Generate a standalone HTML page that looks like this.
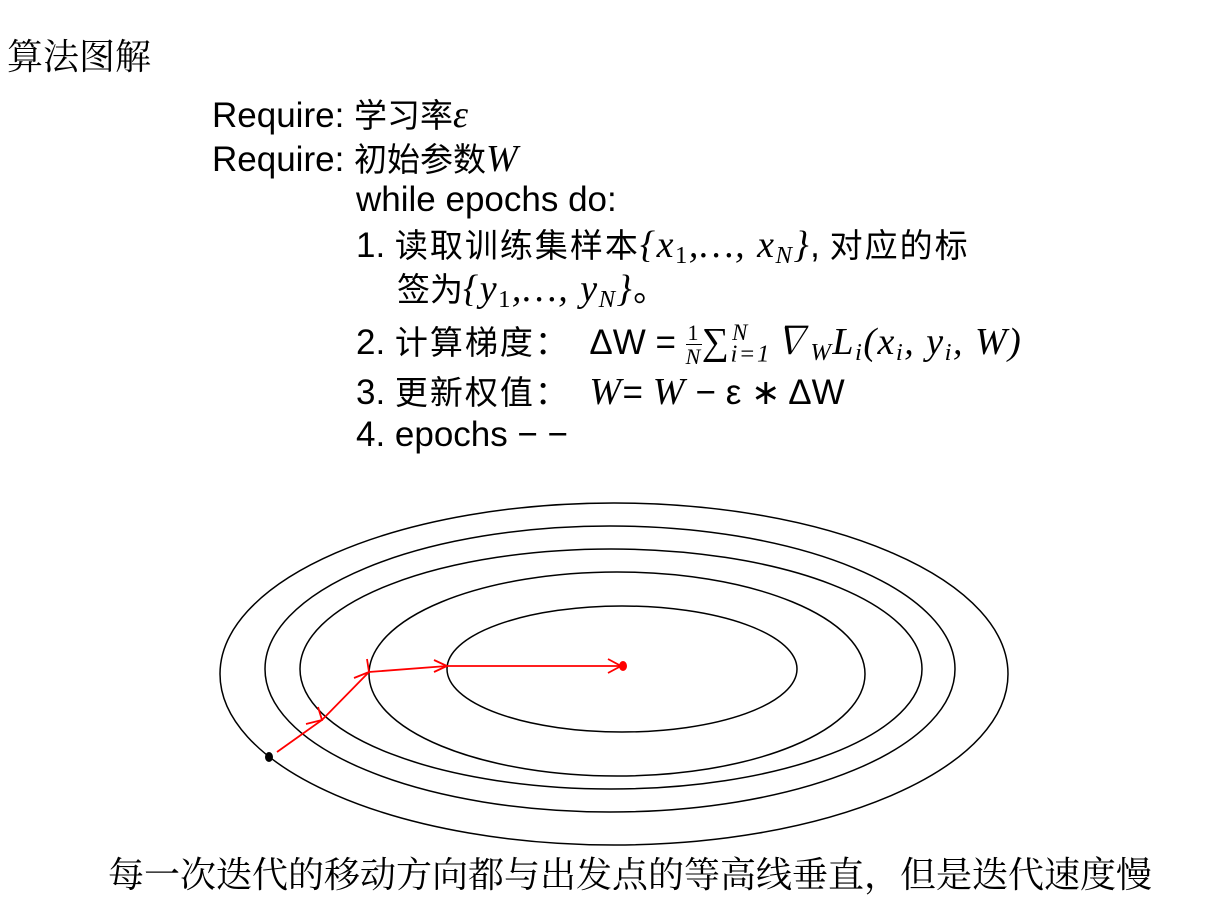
<!DOCTYPE html>
<html><head><meta charset="utf-8"><style>
body{margin:0;width:1214px;height:897px;background:#fff;position:relative;overflow:hidden;font-family:"Liberation Sans","Noto Sans CJK SC",sans-serif;color:#000}
.l{position:absolute;white-space:nowrap;font-size:35px;line-height:1}
.c{font-size:33px}
.m{font-family:"Liberation Serif","Noto Serif CJK SC",serif;font-style:italic;font-size:38px;letter-spacing:1.5px}
sub{font-size:0.65em;vertical-align:-0.25em}
sup{font-size:0.6em;vertical-align:0.6em}
.s{font-family:"Noto Serif CJK SC",serif}
</style></head><body>
<div class="l s" style="left:7px;top:37px;font-size:36px">算法图解</div>
<div class="l" style="left:212px;top:96px">Require: <span class="c">学习率</span><span class="m">ε</span></div>
<div class="l" style="left:212px;top:140px">Require: <span class="c">初始参数</span><span class="m">W</span></div>
<div class="l" style="left:356px;top:182px">while epochs do:</div>
<div class="l" style="left:356px;top:226px">1. <span class="c" style="letter-spacing:2px">读取训练集样本</span><span class="m">{x<sub style="font-style:normal">1</sub>,…, x<sub>N</sub>}</span>, <span class="c" style="letter-spacing:2px">对应的标</span></div>
<div class="l" style="left:397px;top:270px"><span class="c">签为</span><span class="m">{y<sub style="font-style:normal">1</sub>,…, y<sub>N</sub>}</span><span class="c">。</span></div>
<div class="l" style="left:356px;top:321px">2. <span class="c" style="letter-spacing:2px">计算梯度：</span> &nbsp;ΔW = <span style="display:inline-block;vertical-align:middle;text-align:center;font-size:22px;line-height:1.05" class="m"><span style="display:block;border-bottom:1px solid #000;font-style:normal">1</span>N</span><span class="m">∑<sub style="vertical-align:-0.3em;font-style:italic">i=1</sub><sup style="margin-left:-1.7em">N</sup>&nbsp;&nbsp;∇<sub>W</sub>L<sub>i</sub>(x<sub>i</sub>, y<sub>i</sub>, W)</span></div>
<div class="l" style="left:356px;top:373px">3. <span class="c" style="letter-spacing:2px">更新权值：</span> &nbsp;<span class="m">W</span>= <span class="m">W</span> − ε ∗ ΔW</div>
<div class="l" style="left:356px;top:417px">4. epochs − −</div>
<svg style="position:absolute;left:0;top:0" width="1214" height="897">
<g fill="none" stroke="#000" stroke-width="1.5">
<ellipse cx="614" cy="674" rx="394" ry="171"/>
<ellipse cx="610" cy="669" rx="345" ry="143"/>
<ellipse cx="611" cy="669" rx="311" ry="120"/>
<ellipse cx="617" cy="674" rx="248" ry="102"/>
<ellipse cx="622" cy="669" rx="175" ry="63"/>
</g>
<g fill="none" stroke="#f00" stroke-width="1.8">
<polyline points="277,752 322,720 369,672 447,666 621,666"/>
<polyline points="306,724 322,720 318,707"/>
<polyline points="354,678 369,672 367,659"/>
<polyline points="434,660 447,666 434,672"/>
<polyline points="608,659 621,666 608,673"/>
</g>
<ellipse cx="623" cy="666" rx="4" ry="5" fill="#f00"/>
<ellipse cx="269" cy="757" rx="4" ry="5" fill="#000"/>
</svg>
<div class="l s" style="left:108px;top:855px;font-size:36px">每一次迭代的移动方向都与出发点的等高线垂直，但是迭代速度慢</div>
</body></html>
